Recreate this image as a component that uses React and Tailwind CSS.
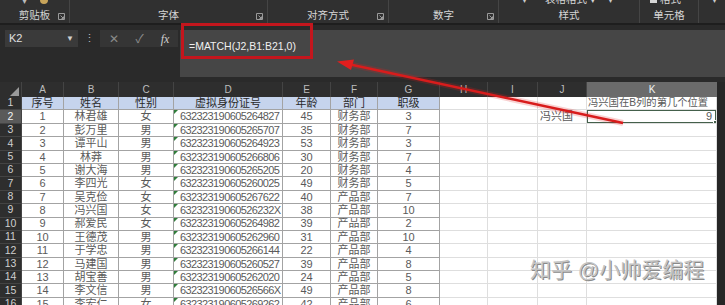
import React from "react";

const rows = [
  ["1", "林君雄", "女", "632323190605264827", "45", "财务部", "3"],
  ["2", "彭万里", "男", "632323190605265707", "35", "财务部", "7"],
  ["3", "谭平山", "男", "632323190605264923", "53", "财务部", "3"],
  ["4", "林莽", "男", "632323190605266806", "30", "财务部", "7"],
  ["5", "谢大海", "男", "632323190605265205", "20", "财务部", "4"],
  ["6", "李四光", "女", "632323190605260025", "49", "财务部", "5"],
  ["7", "吴克俭", "女", "632323190605267622", "40", "产品部", "7"],
  ["8", "冯兴国", "女", "63232319060526232X", "38", "产品部", "10"],
  ["9", "郝爱民", "女", "632323190605264982", "39", "产品部", "2"],
  ["10", "王德茂", "男", "632323190605262960", "31", "产品部", "10"],
  ["11", "于学忠", "男", "632323190605266144", "22", "产品部", "4"],
  ["12", "马建国", "男", "632323190605260527", "39", "产品部", "8"],
  ["13", "胡宝善", "男", "632323190605262020", "24", "产品部", "5"],
  ["14", "李文信", "男", "63232319060526566X", "49", "产品部", "8"],
  ["15", "李宏仁", "女", "632323190605269262", "42", "产品部", "6"],
];

const heads = ["序号", "姓名", "性别", "虚拟身份证号", "年龄", "部门", "职级"];

const Launcher = () => (
  <svg width="7" height="7" viewBox="0 0 7 7" className="absolute right-[4px] top-[13px]">
    <path d="M0.5 0.5h6v6h-6z" fill="none" stroke="#9a9a9a" strokeWidth="1" />
    <path d="M2.5 2.5l3 3M5.5 3.5v2h-2" fill="none" stroke="#9a9a9a" strokeWidth="1" />
  </svg>
);

const Group = ({ w, label, launcher }) => (
  <div className={`relative h-full border-r border-[#454545] flex items-end justify-center pb-[3px] ${w}`}>
    <span className="text-[10.5px] text-[#d6d6d6] leading-none">{label}</span>
    {launcher && <Launcher />}
  </div>
);

const Cell = ({ w, children, className = "" }) => (
  <div className={`shrink-0 h-full box-border border-r border-b flex items-center overflow-hidden whitespace-nowrap ${w} ${className}`}>
    {children}
  </div>
);

export default function App() {
  return (
    <div
      className="relative w-[725px] h-[305px] overflow-hidden bg-[#2a2a2a] select-none"
      style={{ fontFamily: '"Liberation Sans", "Noto Sans CJK SC", sans-serif' }}
    >
      {/* ribbon */}
      <div className="relative h-[25px] bg-[#303030] border-b-2 border-[#1e1e1e] flex overflow-hidden">
        <Group w="w-[70px]" label="剪贴板" launcher />
        <Group w="w-[198px]" label="字体" launcher />
        <Group w="w-[121px]" label="对齐方式" launcher />
        <Group w="w-[110px]" label="数字" launcher />
        <Group w="w-[141px]" label="样式" />
        <Group w="w-[59px]" label="单元格" />
        <div className="flex-1" />
        <span className="absolute left-[22px] -top-[4px] leading-none text-[10px] text-[#bbb]">▾</span>
        <span className="absolute left-[40px] -top-[3px] w-[8px] h-[7px] bg-[#c8a45a] rounded-b-sm" />
        <span className="absolute left-[522px] -top-[5px] leading-none text-[10px] text-[#ccc]">▾</span>
        <span className="absolute left-[545px] -top-[6px] leading-none text-[10.5px] text-[#d6d6d6]">表格格式 ▾</span>
        <span className="absolute left-[608px] -top-[5px] leading-none text-[10px] text-[#ccc]">▾</span>
        <span className="absolute left-[650px] -top-[2px] w-[7px] h-[5px] bg-[#d6d6d6]" />
        <span className="absolute left-[660px] -top-[6px] leading-none text-[10.5px] text-[#d6d6d6]">格式</span>
        <span className="absolute left-[712px] -top-[5px] leading-none text-[10px] text-[#ccc]">▾</span>
      </div>

      {/* formula bar */}
      <div className="h-[57px] flex pt-[5px]">
        <div className="w-[180px] shrink-0 flex items-start">
          <div className="ml-[5px] w-[73px] h-[17px] bg-[#3a3a3a] flex items-center justify-between px-[4px]">
            <span className="text-[11px] text-[#e0e0e0]">K2</span>
            <span className="text-[8px] text-[#cfcfcf]">▼</span>
          </div>
          <div className="w-[22px] h-[17px] flex items-center justify-center text-[11px] text-[#bbb]">⋮</div>
          <div className="w-[78px] h-[17px] bg-[#353535] flex items-center justify-around text-[#8a8a8a]">
            <span className="text-[12px]">✕</span>
            <span className="text-[12px]">✓</span>
            <span
              className="text-[12px] italic text-[#cfcfcf]"
              style={{ fontFamily: '"Liberation Serif", serif' }}
            >
              fx
            </span>
          </div>
        </div>
        <div className="flex-1 h-[47px] bg-[#464646] pl-[9px] pt-[3px]">
          <span className="text-[10.5px] text-[#f0f0f0]">=MATCH(J2,B1:B21,0)</span>
        </div>
      </div>

      {/* column headers */}
      <div className="h-[15px] flex bg-[#2e2e2e] text-[10px] text-[#bdbdbd]">
        <div className="w-[22px] shrink-0 border-r border-[#444] flex items-end justify-end pr-[2px] pb-[1px]">
          <svg width="9" height="9" viewBox="0 0 9 9">
            <path d="M9 0V9H0z" fill="#9a9a9a" />
          </svg>
        </div>
        {[
          ["A", "w-[42px]"],
          ["B", "w-[55px]"],
          ["C", "w-[55px]"],
          ["D", "w-[109px]"],
          ["E", "w-[48px]"],
          ["F", "w-[47px]"],
          ["G", "w-[62px]"],
          ["H", "w-[48px]"],
          ["I", "w-[50px]"],
          ["J", "w-[49px]"],
        ].map(([l, w]) => (
          <div key={l} className={`${w} shrink-0 border-r border-[#444] flex items-center justify-center`}>
            {l}
          </div>
        ))}
        <div className="w-[130px] shrink-0 bg-[#6b6b6b] text-[#f2f2f2] flex items-center justify-center">K</div>
        <div className="flex-1 bg-[#262626]" />
      </div>

      {/* grid */}
      <div className="flex flex-col">
        {[null, ...rows].map((r, i) => {
          const n = i + 1;
          const head = i === 0;
          const t = "border-[#a3a3a3]";
          const g = "border-[#dedede]";
          return (
            <div key={n} className="h-[13.4px] flex text-[#5a5a5a]">
              <Cell
                w="w-[22px]"
                className={`justify-center text-[10.5px] border-[#444] ${
                  n === 2 ? "bg-[#5a5a5a] text-[#f2f2f2]" : "bg-[#2e2e2e] text-[#d0d0d0]"
                }`}
              >
                {n}
              </Cell>
              {head ? (
                heads.map((h, k) => (
                  <Cell
                    key={h}
                    w={["w-[42px]", "w-[55px]", "w-[55px]", "w-[109px]", "w-[48px]", "w-[47px]", "w-[62px]"][k]}
                    className={`justify-center bg-[#c6d4ed] text-[11px] text-[#2a2a2a] ${t}`}
                  >
                    {h}
                  </Cell>
                ))
              ) : (
                <>
                  <Cell w="w-[42px]" className={`justify-center bg-white text-[11px] ${t}`}>{r[0]}</Cell>
                  <Cell w="w-[55px]" className={`justify-center bg-white text-[11px] ${t}`}>{r[1]}</Cell>
                  <Cell w="w-[55px]" className={`justify-center bg-white text-[11px] ${t}`}>{r[2]}</Cell>
                  <Cell w="w-[109px]" className={`relative bg-white pl-[6px] text-[11px] tracking-[-0.6px] ${t}`}>
                    <span className="absolute left-0 top-0 w-0 h-0 border-t-[4px] border-r-[4px] border-t-[#2f7d3a] border-r-transparent" />
                    {r[3]}
                  </Cell>
                  <Cell w="w-[48px]" className={`justify-center bg-white text-[11px] ${t}`}>{r[4]}</Cell>
                  <Cell w="w-[47px]" className={`justify-center bg-white text-[11px] ${t}`}>{r[5]}</Cell>
                  <Cell w="w-[62px]" className={`justify-center bg-white text-[11px] ${t}`}>{r[6]}</Cell>
                </>
              )}
              <Cell w="w-[48px]" className={`bg-white ${g}`} />
              <Cell w="w-[50px]" className={`bg-white ${g}`} />
              <Cell w="w-[49px]" className={`bg-white pl-[2px] text-[11px] ${g}`}>{n === 2 ? "冯兴国" : ""}</Cell>
              <Cell w="w-[130px]" className={`relative bg-white ${g} ${n === 2 ? "justify-end pr-[4px] text-[11px]" : "pl-[1px] text-[10.3px]"}`}>
                {n === 1 && "冯兴国在B列的第几个位置"}
                {n === 2 && (
                  <>
                    9
                    <span className="absolute -inset-px border-2 border-[#44604b]" />
                    <span className="absolute -right-[2px] -bottom-[2px] w-[5px] h-[5px] bg-[#44604b] border border-white" />
                  </>
                )}
              </Cell>
              <div className="flex-1 bg-[#262626]" />
            </div>
          );
        })}
      </div>

      {/* red box around formula */}
      <div className="absolute left-[181px] top-[23px] w-[132px] h-[36px] border-[3px] border-[#c3161d]" />

      {/* red arrow */}
      <svg className="absolute inset-0 pointer-events-none" width="725" height="305" viewBox="0 0 725 305">
        <line x1="623" y1="123" x2="348" y2="64" stroke="#e02020" strokeOpacity="0.2" strokeWidth="6" />
        <line x1="623" y1="123" x2="348" y2="64" stroke="#d81c1c" strokeWidth="2.5" />
        <polygon points="337,61.5 354,59.5 351,70" fill="#e01e1e" />
      </svg>

      {/* watermark */}
      <div
        className="absolute left-[530px] top-[259px] text-[21px] text-[#c4c4c4] leading-none"
        style={{ textShadow: "1px 1px 0 #8a8a8a" }}
      >
        知乎 @小帅爱编程
      </div>
    </div>
  );
}
